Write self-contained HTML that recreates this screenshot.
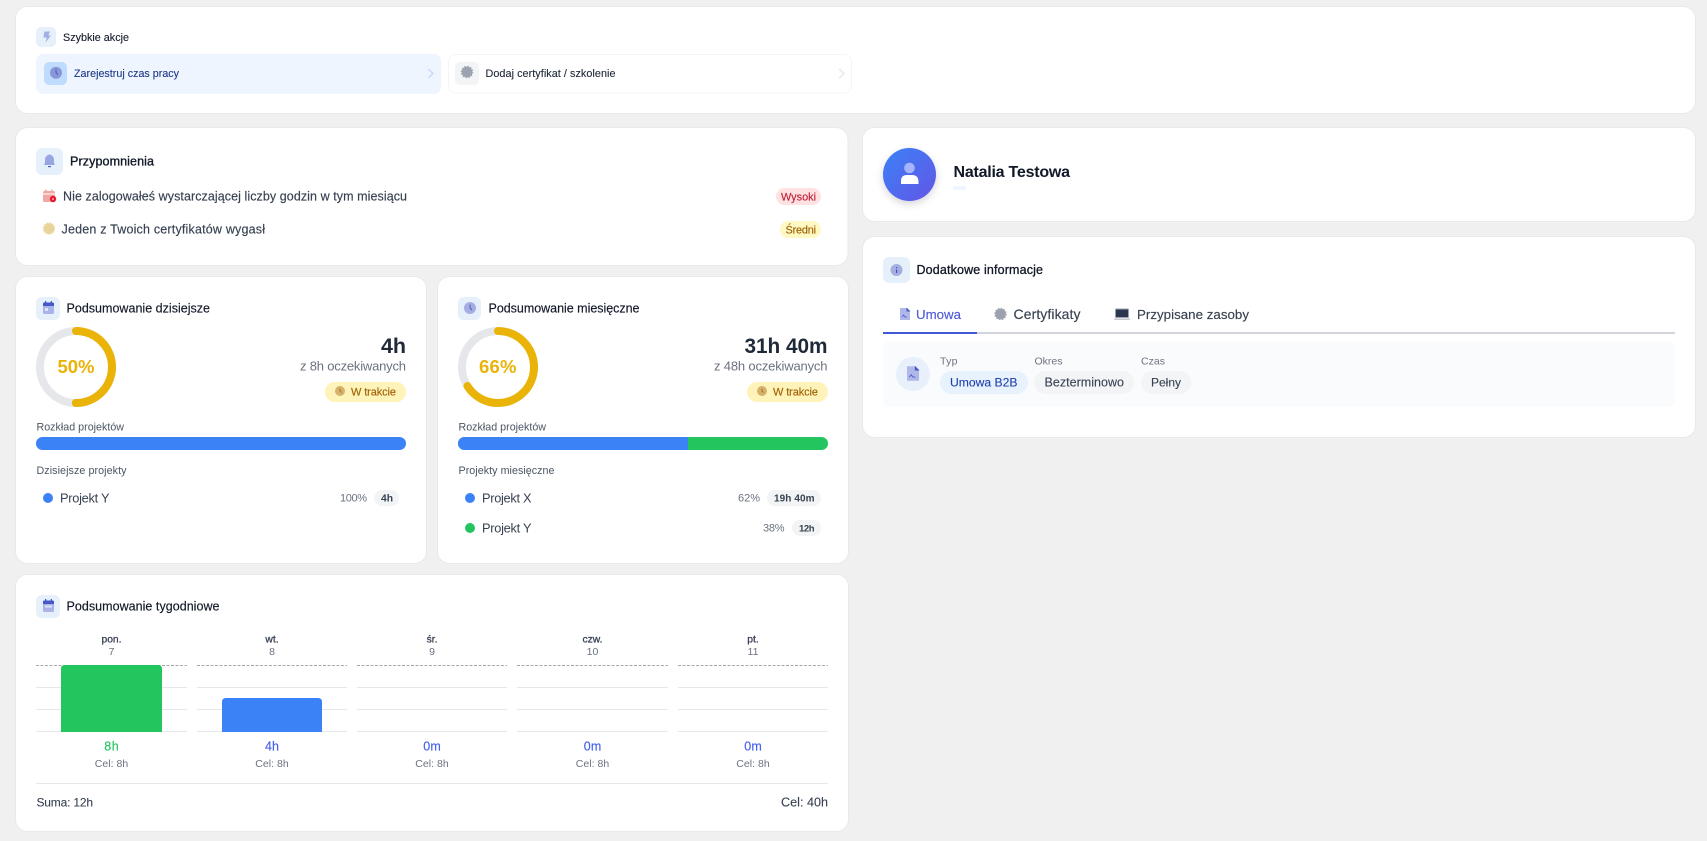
<!DOCTYPE html>
<html lang="pl"><head><meta charset="utf-8"><title>Panel</title>
<style>
html,body{margin:0;padding:0;width:1707px;height:841px;background:#f0f0f0;overflow:hidden}
svg{display:block;position:absolute;left:0;top:0}
text{font-family:"Liberation Sans",sans-serif;white-space:pre}
</style></head><body>
<svg width="1707" height="841" viewBox="0 0 1707 841" xmlns="http://www.w3.org/2000/svg">
<defs>
<g id="clock"><circle r="6" fill="currentColor"/><path d="M0-3.500V0L2 2" fill="none" stroke="#4352b8" stroke-width=".9"/></g>
<g id="cert"><circle r="5.400" fill="currentColor"/><circle r="5.800" fill="none" stroke="currentColor" stroke-width=".9" stroke-dasharray="1.520 1.520"/></g>
<g id="doc"><path d="M-5-6H2L5-3V6H-5Z" fill="#b0b8ea"/><path d="M1.500-6.500L5.500-2.500H1.500Z" fill="#4656c5"/><path d="M-3 3L-1.500 1 0 3H2" fill="none" stroke="#4656c5" stroke-width=".7"/></g>
<linearGradient id="av" x1="0" y1="0" x2="1" y2="1"><stop offset="0" stop-color="#3b82f6"/><stop offset="1" stop-color="#6355e6"/></linearGradient>
<filter id="sh" x="-50%" y="-50%" width="200%" height="200%"><feDropShadow dx="0" dy="3" stdDeviation="4" flood-color="#000" flood-opacity=".16"/></filter>
</defs>
<!-- cards -->
<g fill="#fff" stroke="#e9e9e9">
<rect x="15.500" y="6.500" width="1680" height="107" rx="12"/>
<rect x="15.500" y="127.500" width="832.500" height="138" rx="12"/>
<rect x="15.500" y="276.500" width="411" height="287" rx="12"/>
<rect x="437.500" y="276.500" width="411" height="287" rx="12"/>
<rect x="15.500" y="574.500" width="833" height="257" rx="12"/>
<rect x="862.500" y="127.500" width="833" height="94" rx="12"/>
<rect x="862.500" y="236.500" width="833" height="201" rx="12"/>
</g>
<!-- quick actions -->
<rect x="36" y="27" width="20" height="20" rx="5" fill="#e6f0fb"/>
<path d="M44.500 31.500H50L48.300 35.500H51L45.500 42.500L46.800 37.500H43.300Z" fill="#a3aee3"/>
<g fill="#111827" stroke="#111827" stroke-width=".1"><text x="63" y="41" font-size="10.800" textLength="66">Szybkie akcje</text></g>
<rect x="36" y="54" width="405" height="40" rx="7" fill="#eff5fe"/>
<rect x="44" y="62" width="23" height="23" rx="5" fill="#bfdbfe"/>
<use href="#clock" x="56" y="72.700" color="#8997d8"/>
<g fill="#1e3a8a" stroke="#1e3a8a" stroke-width=".12"><text x="74" y="77" font-size="10.700" textLength="105">Zarejestruj czas pracy</text></g>
<path d="M428.300 69L433 73.500L428.300 78" fill="none" stroke="#c6d9fc" stroke-width="1.400"/>
<rect x="448.500" y="54.500" width="403" height="38.500" rx="7" fill="#fff" stroke="#f5f5f6"/>
<rect x="455" y="62" width="24" height="23" rx="5" fill="#f3f4f6"/>
<use href="#cert" x="467" y="72" color="#9ca3af"/>
<g fill="#1f2937" stroke="#1f2937" stroke-width=".12"><text x="485.500" y="77" font-size="10.800" textLength="130">Dodaj certyfikat / szkolenie</text></g>
<path d="M839.300 69L844 73.500L839.300 78" fill="none" stroke="#e5e7eb" stroke-width="1.400"/>
<!-- reminders -->
<rect x="36" y="148" width="27" height="27" rx="6" fill="#e6f0fb"/>
<path d="M44 165C45.300 163 45 161.500 45 159.500C45 157 47 155 49.500 154.500C52 155 54 157 54 159.500C54 161.500 53.700 163 55 165Z" fill="#98a5e3"/>
<rect x="48" y="166" width="3" height="1.200" fill="#4f5bd5"/>
<g fill="#111827" stroke="#111827" stroke-width=".35"><text x="70" y="165.500" font-size="12.500" textLength="84">Przypomnienia</text></g>
<rect x="43" y="191" width="12" height="11" rx="1.500" fill="#f3a6a6"/><rect x="45" y="189.500" width="1.500" height="3" fill="#f3a6a6"/><rect x="51" y="189.500" width="1.500" height="3" fill="#f3a6a6"/><rect x="43" y="193.500" width="12" height="1" fill="#fff"/>
<circle cx="53" cy="199" r="3.200" fill="#e11d2e"/><circle cx="53" cy="199" r="1" fill="#fca5a5"/>
<g fill="#374151" stroke="#374151" stroke-width=".15"><text x="63" y="200.500" font-size="12.500" textLength="344">Nie zalogowałeś wystarczającej liczby godzin w tym miesiącu</text>
<text x="61.500" y="233.500" font-size="12.500" textLength="203.500">Jeden z Twoich certyfikatów wygasł</text></g>
<use href="#cert" x="49" y="228.500" color="#e9d59b"/>
<rect x="776" y="188" width="45" height="17" rx="8.500" fill="#fee2e2"/>
<text x="781" y="200.500" font-size="10.900" textLength="35" fill="#c0213a" stroke="#c0213a" stroke-width=".15">Wysoki</text>
<rect x="780" y="221" width="41" height="17" rx="8.500" fill="#fef9c3"/>
<text x="785.500" y="233.500" font-size="10.900" textLength="30.500" fill="#a16207" stroke="#a16207" stroke-width=".15">Średni</text>
<!-- today -->
<rect x="36" y="297" width="24" height="23" rx="6" fill="#e6f0fb"/>
<rect x="43" y="303" width="11" height="11" rx="1.500" fill="#a9b3e8"/><path d="M43 303.500Q43 302.500 44.500 302.500H52.500Q54 302.500 54 303.500V306H43Z" fill="#4656c5"/><rect x="45" y="301" width="1.300" height="2.500" fill="#4656c5"/><rect x="50.700" y="301" width="1.300" height="2.500" fill="#4656c5"/><rect x="45" y="308" width="3" height="3" fill="#dfe3f8"/>
<g fill="#111827" stroke="#111827" stroke-width=".15"><text x="66.500" y="312.500" font-size="12.500" textLength="143.500">Podsumowanie dzisiejsze</text></g>
<circle cx="76" cy="367" r="36" fill="none" stroke="#e5e7eb" stroke-width="8"/>
<circle cx="76" cy="367" r="36" fill="none" stroke="#eab308" stroke-width="8" stroke-linecap="round" stroke-dasharray="113.100 226.200" transform="rotate(-90 76 367)"/>
<text x="57.500" y="373" font-size="18.500" font-weight="700" textLength="37" fill="#eab308">50%</text>
<text x="381" y="353" font-size="21.500" font-weight="700" textLength="25" fill="#1f2937">4h</text>
<text x="300" y="370.500" font-size="13" textLength="106" fill="#6b7280">z 8h oczekiwanych</text>
<rect x="325" y="382" width="81" height="20" rx="10" fill="#fef3b8"/>
<circle cx="340" cy="391" r="5" fill="#d4b26b"/><path d="M340 388.500V391L341.500 392.500" fill="none" stroke="#a16207" stroke-width=".8"/>
<text x="351" y="395.500" font-size="11" textLength="45" fill="#a16207" stroke="#a16207" stroke-width=".15">W trakcie</text>
<text x="36.500" y="430.500" font-size="10.700" textLength="87.500" fill="#4b5563">Rozkład projektów</text>
<rect x="36" y="437" width="370" height="13" rx="6.500" fill="#3b82f6"/>
<text x="36.500" y="474" font-size="10.700" textLength="90" fill="#4b5563">Dzisiejsze projekty</text>
<circle cx="48" cy="498" r="5" fill="#3b82f6"/>
<text x="60" y="502.500" font-size="12.800" textLength="49.500" fill="#374151">Projekt Y</text>
<text x="340" y="501.500" font-size="11" textLength="27" fill="#6b7280">100%</text>
<rect x="374" y="490" width="25" height="16" rx="8" fill="#f3f4f6"/>
<text x="381" y="501.500" font-size="10.300" font-weight="700" textLength="12" fill="#374151">4h</text>
<!-- month -->
<rect x="458" y="297" width="23" height="23" rx="6" fill="#e6f0fb"/>
<use href="#clock" x="470" y="308" color="#a5aee1"/>
<g fill="#111827" stroke="#111827" stroke-width=".15"><text x="488.500" y="312.500" font-size="12.500" textLength="151">Podsumowanie miesięczne</text></g>
<circle cx="498" cy="367" r="36" fill="none" stroke="#e5e7eb" stroke-width="8"/>
<circle cx="498" cy="367" r="36" fill="none" stroke="#eab308" stroke-width="8" stroke-linecap="round" stroke-dasharray="149.300 226.200" transform="rotate(-90 498 367)"/>
<text x="479" y="373" font-size="18.500" font-weight="700" textLength="37.500" fill="#eab308">66%</text>
<text x="744.500" y="353" font-size="20.800" font-weight="700" textLength="83" fill="#1f2937">31h 40m</text>
<text x="714" y="370.500" font-size="13" textLength="113.500" fill="#6b7280">z 48h oczekiwanych</text>
<rect x="747" y="382" width="81" height="20" rx="10" fill="#fef3b8"/>
<circle cx="762" cy="391" r="5" fill="#d4b26b"/><path d="M762 388.500V391L763.500 392.500" fill="none" stroke="#a16207" stroke-width=".8"/>
<text x="773" y="395.500" font-size="11" textLength="45" fill="#a16207" stroke="#a16207" stroke-width=".15">W trakcie</text>
<text x="458.500" y="430.500" font-size="10.700" textLength="87.500" fill="#4b5563">Rozkład projektów</text>
<rect x="458" y="437" width="370" height="13" rx="6.500" fill="#22c55e"/>
<path d="M688 437H464.500A6.500 6.500 0 0 0 464.500 450H688Z" fill="#3b82f6"/>
<text x="458.500" y="474" font-size="10.700" textLength="96" fill="#4b5563">Projekty miesięczne</text>
<circle cx="470" cy="498" r="5" fill="#3b82f6"/>
<text x="482" y="502.500" font-size="12.800" textLength="49.500" fill="#374151">Projekt X</text>
<text x="738" y="501.500" font-size="11" textLength="22" fill="#6b7280">62%</text>
<rect x="767" y="490" width="54" height="16" rx="8" fill="#f3f4f6"/>
<text x="774" y="501.500" font-size="10" font-weight="700" textLength="40.500" fill="#374151">19h 40m</text>
<circle cx="470" cy="528" r="5" fill="#22c55e"/>
<text x="482" y="532.500" font-size="12.800" textLength="49.500" fill="#374151">Projekt Y</text>
<text x="763" y="531.500" font-size="11" textLength="21.500" fill="#6b7280">38%</text>
<rect x="792" y="520" width="29" height="16" rx="8" fill="#f3f4f6"/>
<text x="799" y="531.500" font-size="9.500" font-weight="700" textLength="15.500" fill="#374151">12h</text>
<!-- week -->
<rect x="36" y="595" width="24" height="23" rx="6" fill="#e6f0fb"/>
<rect x="43" y="601" width="11" height="11" rx="1.500" fill="#a9b3e8"/><path d="M43 601.500Q43 600.500 44.500 600.500H52.500Q54 600.500 54 601.500V604H43Z" fill="#4656c5"/><rect x="45" y="599" width="1.300" height="2.500" fill="#4656c5"/><rect x="50.700" y="599" width="1.300" height="2.500" fill="#4656c5"/><rect x="45" y="605.500" width="7" height="2" fill="#dfe3f8"/>
<g fill="#111827" stroke="#111827" stroke-width=".15"><text x="66.500" y="610.500" font-size="12.500" textLength="153">Podsumowanie tygodniowe</text></g>
<g stroke="#e5e7eb" stroke-width="1">
<path d="M36 687.500H187M36 709.500H187M36 731.500H187M197 687.500H347M197 709.500H347M197 731.500H347M357 687.500H507M357 709.500H507M357 731.500H507M517 687.500H668M517 709.500H668M517 731.500H668M678 687.500H828M678 709.500H828M678 731.500H828M36 783.500H828"/>
</g>
<path d="M36 665.500H187M197 665.500H347M357 665.500H507M517 665.500H668M678 665.500H828" stroke="#a3a7ae" stroke-dasharray="3 1.500" fill="none"/>
<path d="M61 732V669Q61 665 65 665H158Q162 665 162 669V732Z" fill="#22c55e"/>
<path d="M222 732V702Q222 698 226 698H318Q322 698 322 702V732Z" fill="#3b82f6"/>
<g font-size="10.300" text-anchor="middle" fill="#374151" stroke="#374151" stroke-width=".3">
<text x="111.500" y="642.500">pon.</text><text x="272" y="642.500">wt.</text><text x="432" y="642.500">śr.</text><text x="592.500" y="642.500">czw.</text><text x="753" y="642.500">pt.</text>
</g>
<g font-size="10.500" text-anchor="middle" fill="#6b7280">
<text x="111.500" y="655">7</text><text x="272" y="655">8</text><text x="432" y="655">9</text><text x="592.500" y="655">10</text><text x="753" y="655">11</text>
</g>
<g font-size="12.500" text-anchor="middle" fill="#4361ee" stroke="#4361ee" stroke-width=".15">
<text x="111.500" y="750.500" fill="#22c55e" stroke="#22c55e" textLength="14.500">8h</text><text x="272" y="750.500" textLength="14">4h</text><text x="432" y="750.500" textLength="17.500">0m</text><text x="592.500" y="750.500" textLength="17.500">0m</text><text x="753" y="750.500" textLength="17.500">0m</text>
</g>
<g font-size="10.500" text-anchor="middle" fill="#6b7280">
<text x="111.500" y="767" textLength="33.500">Cel: 8h</text><text x="272" y="767" textLength="33.500">Cel: 8h</text><text x="432" y="767" textLength="33.500">Cel: 8h</text><text x="592.500" y="767" textLength="33.500">Cel: 8h</text><text x="753" y="767" textLength="33.500">Cel: 8h</text>
</g>
<g fill="#374151" stroke="#374151" stroke-width=".1"><text x="36.500" y="806.500" font-size="12" textLength="56.500">Suma: 12h</text><text x="781" y="806.500" font-size="12.600" textLength="47">Cel: 40h</text></g>
<!-- profile -->
<circle cx="909.500" cy="174.500" r="26.500" fill="url(#av)" filter="url(#sh)"/>
<circle cx="909.500" cy="168" r="5.300" fill="#a5b4fc"/>
<path d="M901 184V181Q901 175 907 175H912Q918 175 918.500 181V184Z" fill="#fff"/>
<text x="953.500" y="177" font-size="16" font-weight="700" textLength="116.500" fill="#111827">Natalia Testowa</text>
<rect x="953" y="186" width="13" height="4" rx="2" fill="#eff6ff"/>
<!-- info -->
<rect x="883" y="257" width="27" height="26" rx="6" fill="#e6f0fb"/>
<circle cx="896.500" cy="270" r="6" fill="#a5aee1"/><rect x="896" y="267" width="1.200" height="1.200" fill="#4352b8"/><rect x="896" y="269.500" width="1.200" height="3.500" fill="#4352b8"/>
<g fill="#111827" stroke="#111827" stroke-width=".3"><text x="916.500" y="274" font-size="12.500" textLength="126.500">Dodatkowe informacje</text></g>
<use href="#doc" x="905" y="314"/>
<text x="916" y="319" font-size="13.300" textLength="45" fill="#4f5bd5" stroke="#4f5bd5" stroke-width=".15">Umowa</text>
<use href="#cert" x="1000.500" y="314" color="#9ca3af"/>
<text x="1013.500" y="319" font-size="14" textLength="67" fill="#374151" stroke="#374151" stroke-width=".15">Certyfikaty</text>
<rect x="1115" y="308.500" width="14" height="9.500" rx="1" fill="#9ca3af"/><rect x="1116" y="309.500" width="12" height="7.500" fill="#2b374f"/><path d="M1113.500 318.500H1130.500L1129.500 320H1114.500Z" fill="#c5c8ce"/>
<text x="1137" y="319" font-size="13.300" textLength="112" fill="#374151" stroke="#374151" stroke-width=".15">Przypisane zasoby</text>
<rect x="883" y="332" width="792" height="2" fill="#d1d5db"/>
<rect x="883" y="332" width="94" height="2" fill="#4358d6"/>
<rect x="883" y="341" width="792" height="66" rx="7" fill="#fafbfd"/>
<circle cx="913" cy="374" r="17" fill="#e8f1fb"/>
<use href="#doc" transform="translate(913 373.500) scale(1.200)"/>
<g font-size="10.500" fill="#6b7280"><text x="940" y="364.500" textLength="17.500">Typ</text><text x="1034.500" y="364.500" textLength="28">Okres</text><text x="1141" y="364.500" textLength="24">Czas</text></g>
<rect x="940" y="371" width="88" height="23" rx="11.500" fill="#e8f2fc"/>
<rect x="1034" y="371" width="100" height="23" rx="11.500" fill="#f3f4f6"/>
<rect x="1141" y="371" width="50" height="23" rx="11.500" fill="#f3f4f6"/>
<g stroke-width=".1"><text x="950" y="386.500" font-size="12.150" textLength="67.500" fill="#1e40af" stroke="#1e40af">Umowa B2B</text><text x="1044.500" y="386.500" font-size="12.500" textLength="79.500" fill="#374151" stroke="#374151">Bezterminowo</text><text x="1151" y="386.500" font-size="12" textLength="30" fill="#374151" stroke="#374151">Pełny</text></g>
</svg>
</body></html>
